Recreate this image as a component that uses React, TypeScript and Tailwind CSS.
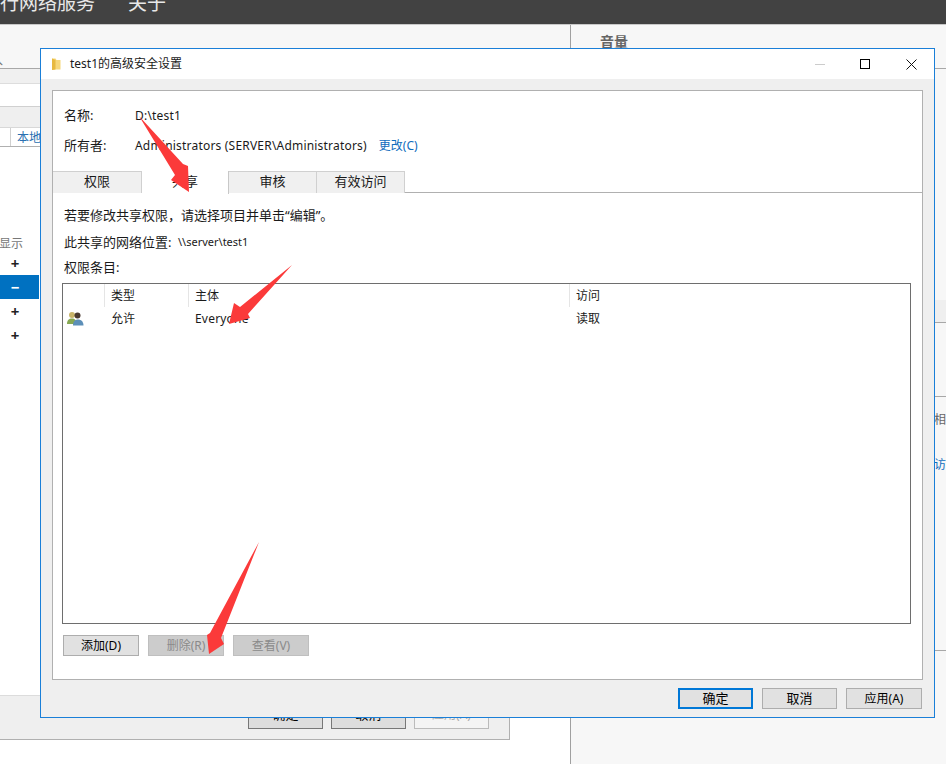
import React from 'react'

const font = { fontFamily: '"Noto Sans", "Noto Sans CJK SC", sans-serif' }

function FolderIcon() {
  return (
    <svg width="10" height="14" viewBox="0 0 10 14" className="shrink-0">
      <path d="M1 1.5h3.5l1 1.5H9.5v9.5H4L1 13z" fill="#f6d77a" />
      <path d="M1 1.5 4.5 3v9.5L1 13z" fill="#e7b93f" />
    </svg>
  )
}

function UsersIcon() {
  return (
    <svg width="17" height="15" viewBox="0 0 17 15">
      <circle cx="5" cy="4" r="3" fill="#c9b56a" />
      <path d="M0 13c0-4 2-5.500 5-5.500s4 1.500 5 5.500z" fill="#86a852" />
      <circle cx="10.500" cy="4.500" r="3" fill="#4a3a30" />
      <path d="M6 14.500c0-4 2-6 5-6s5.500 2 5.500 6z" fill="#5c8fb8" />
    </svg>
  )
}

function DialogButton({
  label,
  tone = 'normal',
  className = '',
}: {
  label: string
  tone?: 'normal' | 'disabled' | 'default'
  className?: string
}) {
  const toneClass =
    tone === 'disabled'
      ? 'bg-[#cccccc] border-[#bfbfbf] text-[#8a8a8a] border'
      : tone === 'default'
        ? 'bg-[#e1e1e1] border-[#0078d7] border-2 text-black'
        : 'bg-[#e1e1e1] border-[#adadad] border text-black'
  return (
    <button className={`h-[21px] flex items-center justify-center leading-none ${toneClass} ${className}`}>
      {label}
    </button>
  )
}

function Tab({ label, active, width }: { label: string; active?: boolean; width: string }) {
  return (
    <div
      className={`flex items-center justify-center pb-[2px] text-[13px] border-r ${width} ${
        active ? 'bg-white border-[#c8c8c8] relative z-10 h-[23px] -mb-px' : 'h-[22px] bg-[#f0f0f0] border-[#d0d0d0] border-t'
      }`}
    >
      {label}
    </div>
  )
}

function SideRow({ sign, active }: { sign: string; active?: boolean }) {
  return (
    <div
      className={`h-6 w-[39px] flex items-center pl-[10px] text-[15px] font-bold leading-none ${
        active ? 'bg-[#0071c1] text-white' : 'text-[#222222]'
      }`}
    >
      <span className="w-[10px] text-center">{sign}</span>
    </div>
  )
}

// Left part of the window behind the dialog
function BackLeft() {
  return (
    <div className="w-[571px] shrink-0 h-full flex flex-col border-r border-[#a0a0a0] bg-white">
      <div className="h-[43px] bg-[#f7f7f7] border-b border-[#a8a8a8] box-content overflow-hidden">
        <div className="pt-[27px] -ml-[11px] text-sm leading-none text-[#777777]">入</div>
      </div>
      <div className="h-[14px] bg-[#f0f0f0] border-b border-[#dddddd] box-content" />
      <div className="h-[22px]" />
      <div className="h-[21px] bg-[#efefef] border-t border-[#d0d0d0]" />
      <div className="h-[20px] flex border-b border-[#b0b0b0] border-t border-t-[#d8d8d8]">
        <div className="w-[11px] border-r border-[#d0d0d0]" />
        <div className="pl-[6px] text-xs leading-[20px] text-[#2a6fb0]">本地</div>
      </div>
      <div className="h-[89px]" />
      <div className="text-xs leading-4 text-[#777777] -ml-[1px]">显示</div>
      <div className="-mt-px">
        <SideRow sign="+" />
        <SideRow sign="−" active />
        <SideRow sign="+" />
        <SideRow sign="+" />
      </div>
      <div className="flex-1" />
      <div className="w-[510px] h-[45px] bg-[#efefef] border-r border-b border-t border-[#b0b0b0] border-t-[#dcdcdc] flex items-end justify-end gap-2 pr-5 pb-[10px] mb-[24px]">
        <button className="w-[75px] h-7 bg-[#dddddd] border border-[#777777] text-[13px] text-black">确定</button>
        <button className="w-[75px] h-7 bg-[#dddddd] border border-[#777777] text-[13px] text-black">取消</button>
        <button className="w-[75px] h-7 bg-[#f4f4f4] border border-[#bbbbbb] text-xs text-[#aaaaaa]">应用(A)</button>
      </div>
    </div>
  )
}

// Right part of the window, mostly covered by the dialog
function BackRight() {
  return (
    <div className="flex-1 min-w-0 overflow-hidden h-full flex flex-col bg-[#f7f7f7]">
      <div className="h-[43px] border-b border-[#a8a8a8] box-content pl-[29px] text-sm leading-none font-bold text-[#666666]">
        <div className="pt-[10px]">音量</div>
      </div>
      <div className="h-[231px]" />
      <div className="h-[22px] bg-[#efefef] border-b border-[#a8a8a8] box-content" />
      <div className="h-[73px] border-b border-[#a8a8a8] box-content" />
      <div className="pl-[363px] pt-[15px] text-xs leading-4 text-[#666666] whitespace-nowrap">相关</div>
      <div className="pl-[363px] pt-[29px] text-xs leading-4 text-[#0f6cbd] whitespace-nowrap">访问</div>
      <div className="h-[177px]" />
      <div className="border-b border-[#a8a8a8]" />
    </div>
  )
}

// Red annotation arrows drawn on the screenshot
function Arrows() {
  return (
    <svg className="absolute inset-0 pointer-events-none z-20" width="946" height="764" viewBox="0 0 946 764">
      <g fill="#fb3a3a">
        <path d="M139 116 L183 164 L188 166 L189 192 L171 180 L175 175 Z" />
        <path d="M292 265 L248 314 L250 318 L229 324 L234 303 L240 307 Z" />
        <path d="M259 542 L221 638 L224 644 L209 654 L207 635 L210 633 Z" />
      </g>
    </svg>
  )
}

export default function App() {
  return (
    <div className="relative w-[946px] h-[764px] overflow-hidden text-xs text-[#1a1a1a]" style={font}>
      <div className="h-[25px] bg-[#424242] border-b border-[#c8c8c8] overflow-hidden whitespace-nowrap">
        <div className="-mt-[11px] flex text-[19px] leading-[28px] text-[#e8e8e8]">
          <span>行网络服务</span>
          <span className="ml-[33px]">关于</span>
        </div>
      </div>
      <div className="flex h-[739px]">
        <BackLeft />
        <BackRight />
      </div>

      {/* Dialog */}
      <div className="absolute left-10 top-12 w-[895px] h-[670px] border border-[#1a7fd8] bg-[#efefef] flex flex-col">
        <div className="h-[30px] bg-white flex items-center pl-[10px] shrink-0">
          <FolderIcon />
          <span className="ml-[9px] text-xs">test1的高级安全设置</span>
          <div className="ml-auto flex items-center">
            <div className="w-[10px] h-px bg-[#cccccc] mr-[35px]" />
            <div className="w-[10px] h-[10px] border border-black mr-[36px]" />
            <svg width="11" height="11" viewBox="0 0 11 11" className="mr-[17px]">
              <path d="M.5.5l10 10M10.500.5l-10 10" stroke="#111111" strokeWidth="1" fill="none" />
            </svg>
          </div>
        </div>

        <div className="flex-1 flex flex-col px-[11px] pt-[11px]">
          <div className="h-[590px] bg-white border border-[#b0b0b0] flex flex-col">
            <div className="h-[80px] px-[11px] pt-[16px]">
              <div className="flex h-[18px] items-center">
                <span className="w-[71px] text-[13px]">名称:</span>
                <span className="tracking-[0.2px]">D:\test1</span>
              </div>
              <div className="flex h-[18px] items-center mt-3">
                <span className="w-[71px] text-[13px]">所有者:</span>
                <span className="tracking-[0.2px]">Administrators (SERVER\Administrators)</span>
                <span className="ml-3 text-[#0f6cbd]">更改(C)</span>
              </div>
            </div>

            <div className="flex border-b border-[#b0b0b0] h-[22px]">
              <Tab label="权限" width="w-[89px]" />
              <Tab label="共享" width="w-[87px]" active />
              <Tab label="审核" width="w-[88px]" />
              <Tab label="有效访问" width="w-[88px]" />
            </div>

            <div className="flex-1 px-[11px] flex flex-col">
              <div className="mt-[13px] h-[18px] text-[13px] leading-[18px] [text-spacing-trim:space-all]">若要修改共享权限，请选择项目并单击“编辑”。</div>
              <div className="mt-[9px] h-[18px] leading-[18px] flex">
                <span className="w-[114px] text-[13px]">此共享的网络位置:</span>
                <span className="text-[11px]">\\server\test1</span>
              </div>
              <div className="mt-[7px] h-[18px] text-[13px] leading-[18px]">权限条目:</div>

              <div className="mt-[7px] h-[341px] -ml-[2px] w-[849px] border border-[#6e6e6e] flex flex-col">
                <div className="flex h-[23px]">
                  <div className="w-[42px] border-r border-[#e5e5e5]" />
                  <div className="w-[84px] border-r border-[#e5e5e5] pl-[6px] leading-[23px]">类型</div>
                  <div className="w-[381px] border-r border-[#e5e5e5] pl-[6px] leading-[23px]">主体</div>
                  <div className="flex-1 pl-[6px] leading-[23px]">访问</div>
                </div>
                <div className="flex h-[23px] items-center">
                  <div className="w-[42px] pl-[4px] flex items-center"><UsersIcon /></div>
                  <div className="w-[84px] pl-[6px]">允许</div>
                  <div className="w-[381px] pl-[6px] tracking-[0.2px]">Everyone</div>
                  <div className="flex-1 pl-[6px]">读取</div>
                </div>
              </div>

              <div className="mt-[11px] -ml-[1px] flex gap-[9px] text-xs">
                <DialogButton label="添加(D)" className="w-[76px]" />
                <DialogButton label="删除(R)" tone="disabled" className="w-[76px]" />
                <DialogButton label="查看(V)" tone="disabled" className="w-[76px]" />
              </div>
            </div>
          </div>

          <div className="mt-2 mr-px flex justify-end gap-[9px]">
            <DialogButton label="确定" tone="default" className="w-[75px] text-[13px]" />
            <DialogButton label="取消" className="w-[75px] text-[13px]" />
            <DialogButton label="应用(A)" className="w-[76px] text-xs" />
          </div>
        </div>
      </div>

      <Arrows />
    </div>
  )
}
